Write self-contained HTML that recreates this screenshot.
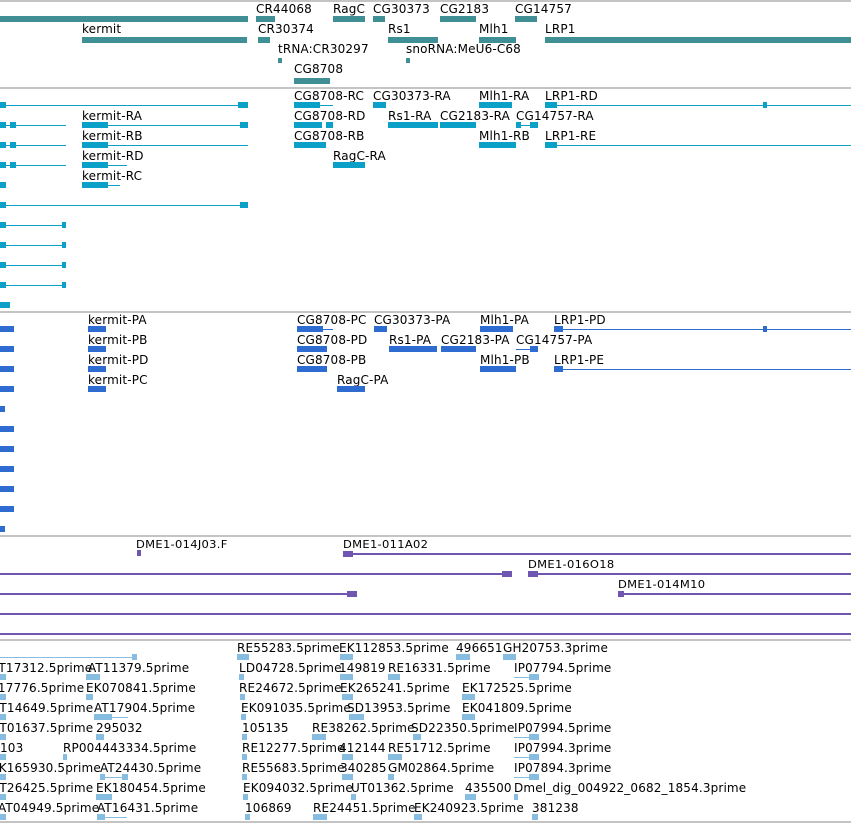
<!DOCTYPE html>
<html><head><meta charset="utf-8"><style>
html,body{margin:0;padding:0;background:#fff;width:851px;height:823px;overflow:hidden;position:relative}
.t{position:absolute;font:12px "DejaVu Sans","Liberation Sans",sans-serif;line-height:14px;white-space:nowrap;color:#000;letter-spacing:0.15px}
.s{font-size:11.5px;letter-spacing:0.3px;transform:scaleY(0.92);transform-origin:0 0}
.b,.l,.g{position:absolute}
.g{background:#c4c4c4;height:2px;left:0;width:851px}
.c1{background:#3f8f95}.c2{background:#0aa0c8}.c3{background:#2f6cd2}.c4{background:#7056b0}.c5{background:#86bde0}
</style></head><body>
<div class="g" style="top:0"></div>
<!-- track 1 -->
<div class="b c1" style="left:0;top:16px;width:248px;height:6px"></div>
<div class="t" style="left:256px;top:2px">CR44068</div><div class="b c1" style="left:256px;top:16px;width:19px;height:6px"></div>
<div class="t" style="left:333px;top:2px">RagC</div><div class="b c1" style="left:333px;top:16px;width:32px;height:6px"></div>
<div class="t" style="left:373px;top:2px">CG30373</div><div class="b c1" style="left:373px;top:16px;width:12px;height:6px"></div>
<div class="t" style="left:440px;top:2px">CG2183</div><div class="b c1" style="left:440px;top:16px;width:36px;height:6px"></div>
<div class="t" style="left:515px;top:2px">CG14757</div><div class="b c1" style="left:515px;top:16px;width:22px;height:6px"></div>
<div class="t" style="left:82px;top:22px">kermit</div><div class="b c1" style="left:82px;top:37px;width:165px;height:6px"></div>
<div class="t" style="left:258px;top:22px">CR30374</div><div class="b c1" style="left:258px;top:37px;width:12px;height:6px"></div>
<div class="t" style="left:388px;top:22px">Rs1</div><div class="b c1" style="left:388px;top:37px;width:50px;height:6px"></div>
<div class="t" style="left:479px;top:22px">Mlh1</div><div class="b c1" style="left:479px;top:37px;width:37px;height:6px"></div>
<div class="t" style="left:545px;top:22px">LRP1</div><div class="b c1" style="left:545px;top:37px;width:306px;height:6px"></div>
<div class="t" style="left:278px;top:42px">tRNA:CR30297</div><div class="b c1" style="left:278px;top:58px;width:4px;height:5px"></div>
<div class="t" style="left:406px;top:42px">snoRNA:MeU6-C68</div><div class="b c1" style="left:406px;top:58px;width:4px;height:5px"></div>
<div class="t" style="left:294px;top:62px">CG8708</div><div class="b c1" style="left:294px;top:78px;width:36px;height:6px"></div>
<div class="g" style="top:87px"></div>
<!-- track 2 -->
<div class="l c2" style="left:0;top:105px;width:248px;height:1px"></div><div class="b c2" style="left:0;top:102px;width:6px;height:6px"></div><div class="b c2" style="left:238px;top:102px;width:10px;height:6px"></div>
<div class="t" style="left:294px;top:89px">CG8708-RC</div><div class="b c2" style="left:294px;top:102px;width:26px;height:6px"></div><div class="l c2" style="left:320px;top:105px;width:13px;height:1px"></div>
<div class="t" style="left:373px;top:89px">CG30373-RA</div><div class="b c2" style="left:373px;top:102px;width:13px;height:6px"></div>
<div class="t" style="left:479px;top:89px">Mlh1-RA</div><div class="b c2" style="left:479px;top:102px;width:33px;height:6px"></div>
<div class="t" style="left:545px;top:89px">LRP1-RD</div><div class="b c2" style="left:545px;top:102px;width:12px;height:6px"></div><div class="l c2" style="left:557px;top:105px;width:294px;height:1px"></div><div class="b c2" style="left:763px;top:102px;width:4px;height:6px"></div>

<div class="l c2" style="left:0;top:125px;width:66px;height:1px"></div><div class="b c2" style="left:0;top:122px;width:6px;height:6px"></div><div class="b c2" style="left:10px;top:122px;width:6px;height:6px"></div>
<div class="t" style="left:82px;top:109px">kermit-RA</div><div class="b c2" style="left:82px;top:122px;width:26px;height:6px"></div><div class="l c2" style="left:108px;top:125px;width:140px;height:1px"></div><div class="b c2" style="left:240px;top:122px;width:8px;height:6px"></div>
<div class="t" style="left:294px;top:109px">CG8708-RD</div><div class="b c2" style="left:294px;top:122px;width:28px;height:6px"></div><div class="b c2" style="left:326px;top:122px;width:7px;height:6px"></div>
<div class="t" style="left:388px;top:109px">Rs1-RA</div><div class="b c2" style="left:388px;top:122px;width:50px;height:6px"></div>
<div class="t" style="left:440px;top:109px">CG2183-RA</div><div class="b c2" style="left:440px;top:122px;width:36px;height:6px"></div>
<div class="t" style="left:516px;top:109px">CG14757-RA</div><div class="l c2" style="left:516px;top:125px;width:22px;height:1px"></div><div class="b c2" style="left:516px;top:122px;width:5px;height:6px"></div><div class="b c2" style="left:530px;top:122px;width:8px;height:6px"></div>

<div class="l c2" style="left:0;top:145px;width:66px;height:1px"></div><div class="b c2" style="left:0;top:142px;width:6px;height:6px"></div><div class="b c2" style="left:10px;top:142px;width:6px;height:6px"></div>
<div class="t" style="left:82px;top:129px">kermit-RB</div><div class="b c2" style="left:82px;top:142px;width:26px;height:6px"></div><div class="l c2" style="left:108px;top:145px;width:140px;height:1px"></div>
<div class="t" style="left:294px;top:129px">CG8708-RB</div><div class="b c2" style="left:294px;top:142px;width:32px;height:6px"></div>
<div class="t" style="left:479px;top:129px">Mlh1-RB</div><div class="b c2" style="left:479px;top:142px;width:37px;height:6px"></div>
<div class="t" style="left:545px;top:129px">LRP1-RE</div><div class="b c2" style="left:545px;top:142px;width:12px;height:6px"></div><div class="l c2" style="left:557px;top:145px;width:294px;height:1px"></div>

<div class="l c2" style="left:0;top:165px;width:66px;height:1px"></div><div class="b c2" style="left:0;top:162px;width:6px;height:6px"></div><div class="b c2" style="left:10px;top:162px;width:6px;height:6px"></div>
<div class="t" style="left:82px;top:149px">kermit-RD</div><div class="b c2" style="left:82px;top:162px;width:26px;height:6px"></div><div class="l c2" style="left:108px;top:165px;width:19px;height:1px"></div>
<div class="t" style="left:333px;top:149px">RagC-RA</div><div class="b c2" style="left:333px;top:162px;width:32px;height:6px"></div>
<div class="b c2" style="left:0;top:182px;width:6px;height:6px"></div>
<div class="t" style="left:82px;top:169px">kermit-RC</div><div class="b c2" style="left:82px;top:182px;width:26px;height:6px"></div><div class="l c2" style="left:108px;top:185px;width:12px;height:1px"></div>
<div class="l c2" style="left:0;top:205px;width:248px;height:1px"></div><div class="b c2" style="left:0;top:202px;width:6px;height:6px"></div><div class="b c2" style="left:240px;top:202px;width:8px;height:6px"></div>
<div class="l c2" style="left:0;top:225px;width:66px;height:1px"></div><div class="b c2" style="left:0;top:222px;width:6px;height:6px"></div><div class="b c2" style="left:62px;top:222px;width:4px;height:6px"></div>
<div class="l c2" style="left:0;top:245px;width:66px;height:1px"></div><div class="b c2" style="left:0;top:242px;width:6px;height:6px"></div><div class="b c2" style="left:62px;top:242px;width:4px;height:6px"></div>
<div class="l c2" style="left:0;top:265px;width:66px;height:1px"></div><div class="b c2" style="left:0;top:262px;width:6px;height:6px"></div><div class="b c2" style="left:62px;top:262px;width:4px;height:6px"></div>
<div class="l c2" style="left:0;top:285px;width:66px;height:1px"></div><div class="b c2" style="left:0;top:282px;width:6px;height:6px"></div><div class="b c2" style="left:62px;top:282px;width:4px;height:6px"></div>
<div class="b c2" style="left:0;top:302px;width:10px;height:6px"></div>
<div class="g" style="top:311px"></div>
<!-- track 3 -->
<div class="t" style="left:88px;top:313px">kermit-PA</div><div class="b c3" style="left:88px;top:326px;width:18px;height:6px"></div>
<div class="t" style="left:297px;top:313px">CG8708-PC</div><div class="b c3" style="left:297px;top:326px;width:26px;height:6px"></div><div class="l c3" style="left:323px;top:329px;width:10px;height:1px"></div>
<div class="t" style="left:374px;top:313px">CG30373-PA</div><div class="b c3" style="left:374px;top:326px;width:13px;height:6px"></div>
<div class="t" style="left:480px;top:313px">Mlh1-PA</div><div class="b c3" style="left:480px;top:326px;width:33px;height:6px"></div>
<div class="t" style="left:554px;top:313px">LRP1-PD</div><div class="b c3" style="left:554px;top:326px;width:9px;height:6px"></div><div class="l c3" style="left:563px;top:329px;width:288px;height:1px"></div><div class="b c3" style="left:763px;top:326px;width:4px;height:6px"></div>
<div class="t" style="left:88px;top:333px">kermit-PB</div><div class="b c3" style="left:88px;top:346px;width:18px;height:6px"></div>
<div class="t" style="left:297px;top:333px">CG8708-PD</div><div class="b c3" style="left:297px;top:346px;width:30px;height:6px"></div>
<div class="t" style="left:389px;top:333px">Rs1-PA</div><div class="b c3" style="left:389px;top:346px;width:48px;height:6px"></div>
<div class="t" style="left:441px;top:333px">CG2183-PA</div><div class="b c3" style="left:441px;top:346px;width:35px;height:6px"></div>
<div class="t" style="left:516px;top:333px">CG14757-PA</div><div class="l c3" style="left:516px;top:349px;width:22px;height:1px"></div><div class="b c3" style="left:530px;top:346px;width:8px;height:6px"></div>
<div class="t" style="left:88px;top:353px">kermit-PD</div><div class="b c3" style="left:88px;top:366px;width:18px;height:6px"></div>
<div class="t" style="left:297px;top:353px">CG8708-PB</div><div class="b c3" style="left:297px;top:366px;width:30px;height:6px"></div>
<div class="t" style="left:480px;top:353px">Mlh1-PB</div><div class="b c3" style="left:480px;top:366px;width:36px;height:6px"></div>
<div class="t" style="left:554px;top:353px">LRP1-PE</div><div class="b c3" style="left:554px;top:366px;width:9px;height:6px"></div><div class="l c3" style="left:563px;top:369px;width:288px;height:1px"></div>
<div class="t" style="left:88px;top:373px">kermit-PC</div><div class="b c3" style="left:88px;top:386px;width:18px;height:6px"></div>
<div class="t" style="left:337px;top:373px">RagC-PA</div><div class="b c3" style="left:337px;top:386px;width:28px;height:6px"></div>
<div class="b c3" style="left:0;top:326px;width:14px;height:6px"></div>
<div class="b c3" style="left:0;top:346px;width:14px;height:6px"></div>
<div class="b c3" style="left:0;top:366px;width:14px;height:6px"></div>
<div class="b c3" style="left:0;top:386px;width:14px;height:6px"></div>
<div class="b c3" style="left:0;top:406px;width:5px;height:6px"></div>
<div class="b c3" style="left:0;top:426px;width:14px;height:6px"></div>
<div class="b c3" style="left:0;top:446px;width:14px;height:6px"></div>
<div class="b c3" style="left:0;top:466px;width:14px;height:6px"></div>
<div class="b c3" style="left:0;top:486px;width:14px;height:6px"></div>
<div class="b c3" style="left:0;top:506px;width:14px;height:6px"></div>
<div class="b c3" style="left:0;top:526px;width:5px;height:6px"></div>
<div class="g" style="top:535px"></div>
<!-- track 4 -->
<div class="t s" style="left:136px;top:538px">DME1-014J03.F</div><div class="b c4" style="left:137px;top:550px;width:4px;height:6px"></div>
<div class="t s" style="left:343px;top:538px">DME1-011A02</div><div class="l c4" style="left:343px;top:553px;width:508px;height:2px"></div><div class="b c4" style="left:343px;top:551px;width:10px;height:6px"></div>
<div class="l c4" style="left:0;top:573px;width:512px;height:2px"></div><div class="b c4" style="left:502px;top:571px;width:10px;height:6px"></div>
<div class="t s" style="left:528px;top:558px">DME1-016O18</div><div class="l c4" style="left:528px;top:573px;width:323px;height:2px"></div><div class="b c4" style="left:528px;top:571px;width:10px;height:6px"></div>
<div class="l c4" style="left:0;top:593px;width:357px;height:2px"></div><div class="b c4" style="left:347px;top:591px;width:10px;height:6px"></div>
<div class="t s" style="left:618px;top:578px">DME1-014M10</div><div class="l c4" style="left:618px;top:593px;width:233px;height:2px"></div><div class="b c4" style="left:618px;top:591px;width:6px;height:6px"></div>
<div class="l c4" style="left:0;top:613px;width:851px;height:2px"></div>
<div class="l c4" style="left:0;top:633px;width:851px;height:2px"></div>
<div class="g" style="top:639px"></div>
<!-- track 5 -->
<div class="l c5" style="left:0;top:657px;width:137px;height:1px"></div><div class="b c5" style="left:132px;top:654px;width:5px;height:6px"></div>
<div class="t" style="left:237px;top:641px">RE55283.5prime</div><div class="b c5" style="left:237px;top:654px;width:12px;height:6px"></div>
<div class="t" style="left:339px;top:641px">EK112853.5prime</div><div class="b c5" style="left:340px;top:654px;width:13px;height:6px"></div>
<div class="t" style="left:456px;top:641px">496651</div><div class="b c5" style="left:456px;top:654px;width:14px;height:6px"></div>
<div class="t" style="left:503px;top:641px">GH20753.3prime</div><div class="b c5" style="left:503px;top:654px;width:13px;height:6px"></div>

<div class="t" style="left:-9px;top:661px">AT17312.5prime</div><div class="b c5" style="left:0;top:674px;width:6px;height:6px"></div>
<div class="t" style="left:88px;top:661px">AT11379.5prime</div><div class="b c5" style="left:86px;top:674px;width:14px;height:6px"></div>
<div class="t" style="left:239px;top:661px">LD04728.5prime</div><div class="b c5" style="left:239px;top:674px;width:5px;height:6px"></div>
<div class="t" style="left:339px;top:661px">149819</div><div class="b c5" style="left:340px;top:674px;width:13px;height:6px"></div>
<div class="t" style="left:388px;top:661px">RE16331.5prime</div><div class="b c5" style="left:388px;top:674px;width:12px;height:6px"></div>
<div class="t" style="left:514px;top:661px">IP07794.5prime</div><div class="l c5" style="left:514px;top:677px;width:25px;height:1px"></div><div class="b c5" style="left:529px;top:674px;width:10px;height:6px"></div>

<div class="t" style="left:-17px;top:681px">AT17776.5prime</div><div class="b c5" style="left:0;top:694px;width:6px;height:6px"></div>
<div class="t" style="left:86px;top:681px">EK070841.5prime</div><div class="b c5" style="left:86px;top:694px;width:7px;height:6px"></div>
<div class="t" style="left:239px;top:681px">RE24672.5prime</div><div class="b c5" style="left:240px;top:694px;width:5px;height:6px"></div>
<div class="t" style="left:340px;top:681px">EK265241.5prime</div><div class="b c5" style="left:342px;top:694px;width:11px;height:6px"></div>
<div class="t" style="left:462px;top:681px">EK172525.5prime</div><div class="b c5" style="left:462px;top:694px;width:13px;height:6px"></div>

<div class="t" style="left:-8px;top:701px">AT14649.5prime</div><div class="b c5" style="left:0;top:714px;width:6px;height:6px"></div>
<div class="t" style="left:94px;top:701px">AT17904.5prime</div><div class="b c5" style="left:94px;top:714px;width:18px;height:6px"></div><div class="l c5" style="left:112px;top:717px;width:16px;height:1px"></div>
<div class="t" style="left:241px;top:701px">EK091035.5prime</div><div class="b c5" style="left:241px;top:714px;width:5px;height:6px"></div>
<div class="t" style="left:347px;top:701px">SD13953.5prime</div><div class="b c5" style="left:349px;top:714px;width:15px;height:6px"></div>
<div class="t" style="left:462px;top:701px">EK041809.5prime</div><div class="b c5" style="left:462px;top:714px;width:13px;height:6px"></div>

<div class="t" style="left:-8px;top:721px">AT01637.5prime</div><div class="b c5" style="left:0;top:734px;width:6px;height:6px"></div>
<div class="t" style="left:96px;top:721px">295032</div><div class="b c5" style="left:96px;top:734px;width:8px;height:6px"></div>
<div class="t" style="left:242px;top:721px">105135</div><div class="b c5" style="left:242px;top:734px;width:5px;height:6px"></div>
<div class="t" style="left:312px;top:721px">RE38262.5prime</div><div class="b c5" style="left:312px;top:734px;width:14px;height:6px"></div>
<div class="t" style="left:411px;top:721px">SD22350.5prime</div><div class="b c5" style="left:413px;top:734px;width:8px;height:6px"></div>
<div class="t" style="left:514px;top:721px">IP07994.5prime</div><div class="l c5" style="left:514px;top:737px;width:25px;height:1px"></div><div class="b c5" style="left:529px;top:734px;width:10px;height:6px"></div>

<div class="t" style="left:0;top:741px">103</div><div class="b c5" style="left:0;top:754px;width:6px;height:6px"></div>
<div class="t" style="left:63px;top:741px">RP004443334.5prime</div><div class="b c5" style="left:63px;top:754px;width:4px;height:6px"></div>
<div class="t" style="left:242px;top:741px">RE12277.5prime</div><div class="b c5" style="left:242px;top:754px;width:5px;height:6px"></div>
<div class="t" style="left:339px;top:741px">412144</div><div class="b c5" style="left:342px;top:754px;width:11px;height:6px"></div>
<div class="t" style="left:388px;top:741px">RE51712.5prime</div><div class="b c5" style="left:388px;top:754px;width:14px;height:6px"></div>
<div class="t" style="left:514px;top:741px">IP07994.3prime</div><div class="l c5" style="left:514px;top:757px;width:25px;height:1px"></div><div class="b c5" style="left:529px;top:754px;width:10px;height:6px"></div>

<div class="t" style="left:-9px;top:761px">EK165930.5prime</div><div class="b c5" style="left:0;top:774px;width:6px;height:6px"></div>
<div class="t" style="left:100px;top:761px">AT24430.5prime</div><div class="l c5" style="left:100px;top:777px;width:28px;height:1px"></div><div class="b c5" style="left:100px;top:774px;width:5px;height:6px"></div><div class="b c5" style="left:122px;top:774px;width:6px;height:6px"></div>
<div class="t" style="left:242px;top:761px">RE55683.5prime</div><div class="b c5" style="left:242px;top:774px;width:5px;height:6px"></div>
<div class="t" style="left:340px;top:761px">340285</div><div class="b c5" style="left:342px;top:774px;width:11px;height:6px"></div>
<div class="t" style="left:388px;top:761px">GM02864.5prime</div><div class="b c5" style="left:388px;top:774px;width:6px;height:6px"></div>
<div class="t" style="left:514px;top:761px">IP07894.3prime</div><div class="l c5" style="left:514px;top:777px;width:25px;height:1px"></div><div class="b c5" style="left:529px;top:774px;width:10px;height:6px"></div>

<div class="t" style="left:-8px;top:781px">AT26425.5prime</div><div class="b c5" style="left:0;top:794px;width:6px;height:6px"></div>
<div class="t" style="left:96px;top:781px">EK180454.5prime</div><div class="b c5" style="left:96px;top:794px;width:16px;height:6px"></div>
<div class="t" style="left:243px;top:781px">EK094032.5prime</div><div class="b c5" style="left:243px;top:794px;width:5px;height:6px"></div>
<div class="t" style="left:351px;top:781px">UT01362.5prime</div><div class="b c5" style="left:351px;top:794px;width:5px;height:6px"></div>
<div class="t" style="left:465px;top:781px">435500</div><div class="b c5" style="left:465px;top:794px;width:11px;height:6px"></div>
<div class="t" style="left:514px;top:781px">Dmel_dig_004922_0682_1854.3prime</div><div class="b c5" style="left:514px;top:794px;width:4px;height:6px"></div>

<div class="t" style="left:-2px;top:801px">AT04949.5prime</div><div class="b c5" style="left:0;top:814px;width:6px;height:6px"></div>
<div class="t" style="left:97px;top:801px">AT16431.5prime</div><div class="l c5" style="left:97px;top:817px;width:30px;height:1px"></div><div class="b c5" style="left:97px;top:814px;width:8px;height:6px"></div>
<div class="t" style="left:245px;top:801px">106869</div><div class="b c5" style="left:245px;top:814px;width:5px;height:6px"></div>
<div class="t" style="left:313px;top:801px">RE24451.5prime</div><div class="b c5" style="left:313px;top:814px;width:14px;height:6px"></div>
<div class="t" style="left:414px;top:801px">EK240923.5prime</div><div class="b c5" style="left:414px;top:814px;width:8px;height:6px"></div>
<div class="t" style="left:532px;top:801px">381238</div><div class="b c5" style="left:532px;top:814px;width:6px;height:6px"></div>
<div class="g" style="top:821px"></div>
</body></html>
